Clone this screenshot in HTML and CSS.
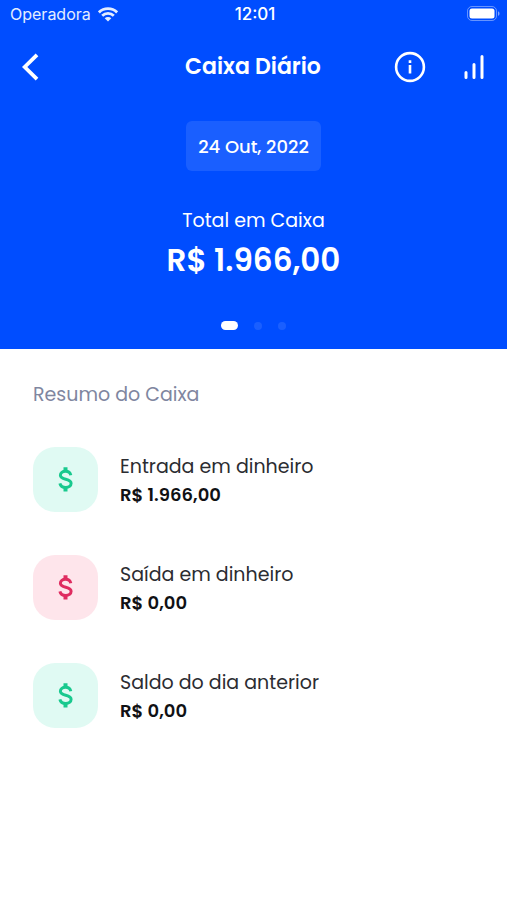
FILE: index.html
```html
<!DOCTYPE html>
<html lang="pt-BR">
<head>
<meta charset="utf-8">
<meta name="viewport" content="width=device-width, initial-scale=1">
<title>Caixa Diário</title>
<link rel="stylesheet" href="styles.css">
</head>
<body>
<header class="hero">
  <div class="status">
    <div class="carrier">
      <span>Operadora</span>
      <svg width="20" height="15" viewBox="0 0 20 15" aria-hidden="true" fill="none" stroke="currentColor" stroke-width="2.8">
        <path d="M.9 5.4a13 13 0 0 1 18.2 0"/>
        <path d="M4.2 8.8a8.3 8.3 0 0 1 11.6 0"/>
        <path d="M10 14.6 6.7 11.3a4.7 4.7 0 0 1 6.6 0z" fill="currentColor" stroke="none"/>
      </svg>
    </div>
    <time class="clock">12:01</time>
    <svg class="battery" width="33" height="16" viewBox="0 0 33 16" aria-hidden="true">
      <rect x=".5" y=".5" width="29" height="14" rx="4.5" fill="none" stroke="#fff" stroke-opacity=".4"/>
      <rect x="2.5" y="2.5" width="25" height="10" rx="2.5" fill="#fff"/>
      <path d="M31 5.2c2 .8 2 3.8 0 4.6z" fill="#fff" fill-opacity=".5"/>
    </svg>
  </div>

  <nav class="navbar">
    <button class="icon-button" type="button" aria-label="Voltar">
      <svg width="18" height="28" viewBox="0 0 18 28" fill="none" stroke="currentColor" stroke-width="3.8"><path d="M16 1.8 3.700 14l12.300 12.200"/></svg>
    </button>
    <h1 class="title">Caixa Diário</h1>
    <div class="actions">
      <button class="icon-button" type="button" aria-label="Informações">
        <svg width="32" height="32" viewBox="0 0 32 32" fill="none" stroke="currentColor" stroke-width="2.6"><circle cx="16" cy="16" r="13.9"/><path d="M16 14v8.4M16 9.3v2.6"/></svg>
      </button>
      <button class="icon-button" type="button" aria-label="Relatório">
        <svg width="22" height="26" viewBox="0 0 22 26" fill="none" stroke="currentColor" stroke-width="3" stroke-linecap="round"><path d="M3 18.5v5M11 10.500v13M19 2.500v21"/></svg>
      </button>
    </div>
  </nav>

  <button class="date" type="button">24 Out, 2022</button>
  <p class="total-label">Total em Caixa</p>
  <p class="total">R$ 1.966,00</p>
  <div class="dots" aria-hidden="true">
    <span class="dot dot-active"></span><span class="dot"></span><span class="dot"></span>
  </div>
</header>

<svg class="sprite" width="0" height="0" aria-hidden="true">
  <symbol id="dollar" viewBox="0 0 15 25">
    <path d="M7.500 .300v4M7.500 20.500v4" fill="none" stroke="currentColor" stroke-width="4"/>
    <path d="M12.800 8.300C12.300 5.700 10.200 4.300 7.500 4.300c-3 0-5.100 1.600-5.100 4 0 5.200 10.700 2.700 10.700 8 0 2.500-2.300 4.200-5.400 4.200-3 0-5.200-1.500-5.800-4.200" fill="none" stroke="currentColor" stroke-width="3"/>
  </symbol>
</svg>

<main class="summary">
  <h2 class="heading">Resumo do Caixa</h2>
  <ul class="entries">
    <li class="entry">
      <span class="tile tile-in"><svg width="15" height="25" aria-hidden="true"><use href="#dollar"/></svg></span>
      <div><p class="name">Entrada em dinheiro</p><p class="value">R$ 1.966,00</p></div>
    </li>
    <li class="entry">
      <span class="tile tile-out"><svg width="15" height="25" aria-hidden="true"><use href="#dollar"/></svg></span>
      <div><p class="name">Saída em dinheiro</p><p class="value">R$ 0,00</p></div>
    </li>
    <li class="entry">
      <span class="tile tile-in"><svg width="15" height="25" aria-hidden="true"><use href="#dollar"/></svg></span>
      <div><p class="name">Saldo do dia anterior</p><p class="value">R$ 0,00</p></div>
    </li>
  </ul>
</main>
</body>
</html>
```

FILE: styles.css
```css
* { box-sizing: border-box; }
body, h1, h2, p, ul { margin: 0; padding: 0; }
body {
  background: #fff;
  color: #2b2c31;
  font-family: Poppins, Inter, "Open Sans", sans-serif;
}
svg { display: block; }
.sprite { position: absolute; }
button {
  border: 0;
  background: none;
  color: inherit;
  font: inherit;
  padding: 0;
}

.hero {
  display: flex;
  flex-direction: column;
  align-items: center;
  background: #004dff;
  color: #fff;
  padding-bottom: 19px;
}
.status, .navbar {
  align-self: stretch;
  display: grid;
  grid-template-columns: 1fr auto 1fr;
  align-items: center;
}
.status {
  height: 28px;
  padding: 0 7px 0 10px;
  font-family: Inter, sans-serif;
  font-size: 16px;
}
.carrier {
  display: flex;
  align-items: center;
  gap: 7px;
  color: #e3edff;
}
.clock {
  font-size: 17px;
  font-weight: 500;
}
.battery { justify-self: end; }

.navbar {
  height: 77px;
  padding: 0 22px 0 21px;
}
.icon-button { justify-self: start; }
.title {
  font-size: 22px;
  font-weight: 600;
  line-height: 32px;
}
.actions {
  display: flex;
  align-items: center;
  justify-content: flex-end;
  gap: 37px;
}

.date {
  margin-top: 16px;
  height: 50px;
  padding: 0 12px;
  border-radius: 6px;
  background: #1a5fff;
  font-size: 18px;
  font-weight: 500;
}
.total-label {
  margin-top: 36px;
  font-size: 19px;
  line-height: 28px;
}
.total {
  margin-top: 4px;
  font-size: 31px;
  font-weight: 600;
  line-height: 42px;
}
.dots {
  display: flex;
  align-items: center;
  gap: 16px;
  margin-top: 40px;
}
.dot {
  width: 8px;
  height: 8px;
  border-radius: 4px;
  background: #1a5fff;
}
.dot-active {
  width: 17px;
  height: 9px;
  border-radius: 5px;
  background: #fff;
}

.summary { padding: 32px 33px; }
.heading {
  color: #8086a0;
  font-size: 19px;
  font-weight: 400;
  line-height: 28px;
}
.entries {
  display: grid;
  gap: 43px;
  margin-top: 38px;
  list-style: none;
}
.entry {
  display: flex;
  align-items: center;
  gap: 22px;
}
.tile {
  display: grid;
  place-items: center;
  flex: none;
  width: 65px;
  height: 65px;
  border-radius: 22px;
}
.tile-in { background: #e0faf3; color: #19c98e; }
.tile-out { background: #fee5eb; color: #df2c60; }
.name, .value { line-height: 28px; }
.name {
  padding-top: 2px;
  font-size: 19px;
}
.value {
  color: #101114;
  font-size: 18px;
  font-weight: 600;
}
```
